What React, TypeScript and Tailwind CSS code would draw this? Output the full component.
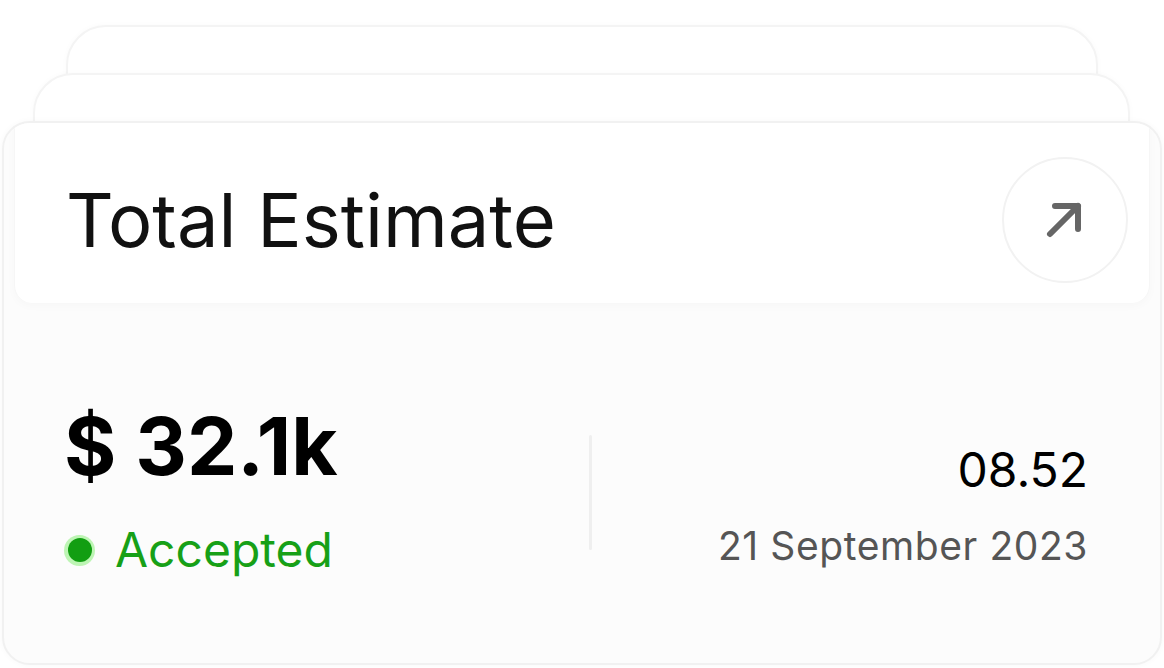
import React from "react";

export default function App() {
  return (
    <div
      className="relative w-[1164px] h-[668px] bg-white overflow-hidden"
      style={{ fontFamily: "Inter, 'Noto Sans', sans-serif" }}
    >
      {/* stacked back cards */}
      <div className="absolute left-[66px] top-[25px] w-[1032px] h-[150px] rounded-[40px] bg-white border-2 border-[#f4f4f4] shadow-[0_0_6px_rgba(0,0,0,0.025)]" />
      <div className="absolute left-[33px] top-[73px] w-[1097px] h-[150px] rounded-[40px] bg-white border-2 border-[#f4f4f4] shadow-[0_0_6px_rgba(0,0,0,0.025)]" />

      {/* front card */}
      <div className="relative mt-[121px] mx-[2px] h-[544px] rounded-[28px] bg-[#fcfcfc] border-2 border-[#f1f1f1] shadow-[0_0_6px_rgba(0,0,0,0.03)] overflow-hidden flex flex-col">
        {/* header */}
        <div className="mx-[10px] h-[180px] shrink-0 rounded-b-[18px] bg-white shadow-[0_3px_10px_rgba(0,0,0,0.025)] border-x border-[#f6f6f6] flex items-center justify-between pt-[14px] pl-[51px] pr-[21px]">
          <div className="text-[74px] leading-none text-[#111]">
            Total Estimate
          </div>
          <div className="w-[126px] h-[126px] rounded-full border-2 border-[#f2f2f2] bg-white flex items-center justify-center">
            <svg width="40" height="40" viewBox="0 0 40 40" fill="none" stroke="#666" strokeWidth="6" strokeLinecap="round" strokeLinejoin="round">
              <path d="M5 34 L33 6" />
              <path d="M10 6 H33 V29" />
            </svg>
          </div>
        </div>

        {/* body */}
        <div className="flex flex-1">
          <div className="w-[585px] shrink-0 pl-[60px] pt-[103px]">
            <div className="text-[80px] leading-none font-bold text-black">
              $ 32.1k
            </div>
            <div className="mt-[40px] flex items-center">
              <div className="w-[31px] h-[31px] rounded-full bg-[#bdf5b4] flex items-center justify-center">
                <div className="w-[24px] h-[24px] rounded-full bg-[#129e12]" />
              </div>
              <span className="ml-[20px] text-[48px] leading-none text-[#17a017]">
                Accepted
              </span>
            </div>
          </div>
          <div className="w-[3px] h-[115px] mt-[132px] bg-[#efefef] rounded-full" />
          <div className="flex-1 pr-[72px] pt-[143px] text-right">
            <div className="text-[48px] leading-none text-black">08.52</div>
            <div className="mt-[32px] text-[39px] leading-none text-[#555] tracking-[0.015em]">
              21 September 2023
            </div>
          </div>
        </div>
      </div>
    </div>
  );
}
